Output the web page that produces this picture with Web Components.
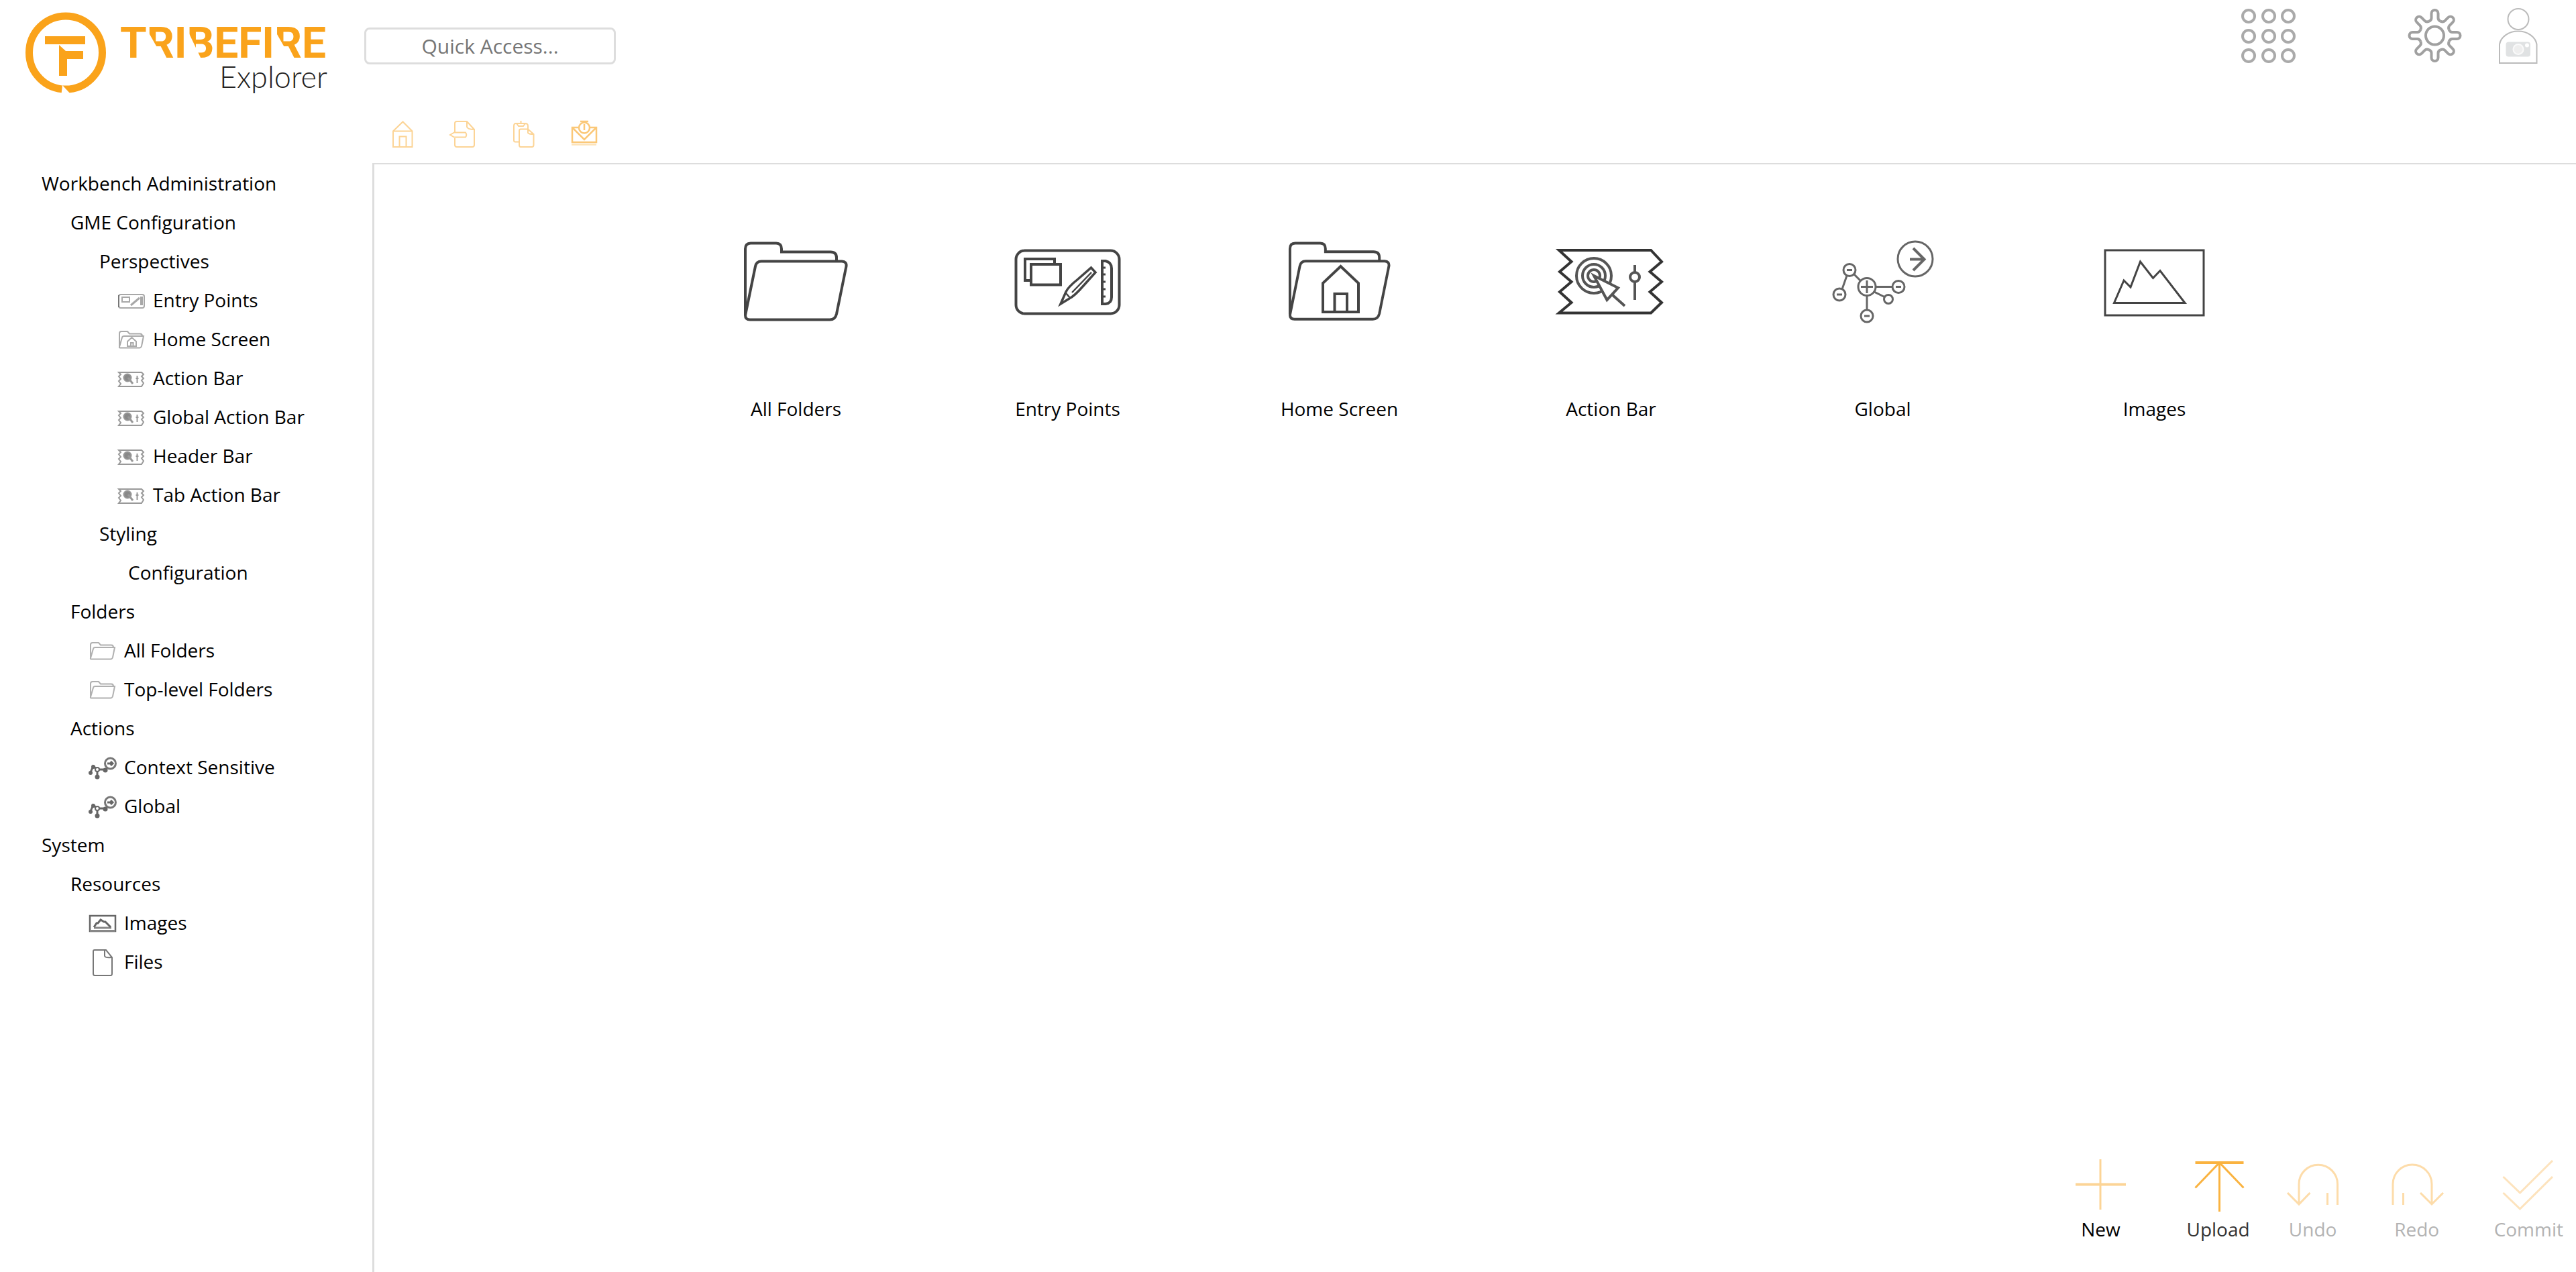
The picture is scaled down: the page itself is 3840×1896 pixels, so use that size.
<!DOCTYPE html>
<html lang="en">
<head>
<meta charset="utf-8">
<title>Tribefire Explorer</title>
<style>
html, body { margin: 0; }
body { font: 28px/38px "Open Sans", "Noto Sans", sans-serif; color: #000; background: #fff; }
</style>
</head>
<body>
<explorer-app></explorer-app>
<script>
const tooth = 'M-8.8 -21.2Q-5 -22.8 -5 -26V-33A5 5 0 0 1 5 -33V-26Q5 -22.8 8.8 -21.2';
const teeth = [0,45,90,135,180,225,270,315].map(a => `<path d="${tooth}" transform="rotate(${a})"/>`).join('');
const dots = [10,40,69].map(y => [10,40,69].map(x => `<circle cx="${x}" cy="${y}" r="9"/>`).join('')).join('');
const folderPaths = `<path d="M4 129V31Q4 22.5 12 22.5H50Q58 22.5 58 31V35.5H131Q140 35.5 140 44V49.5"/><path d="M4 130L19 57Q20.5 49.5 28 49.5H148Q155.500 50 154.500 57L140 128Q138 136.500 130 136.500H11Q4 136.500 4 130Z"/>`;
const miniFolder = '<path d="M2 27V6Q2 3 5 3H14L17 6.500H33Q36 6.500 36 10"/><path d="M2 26L6 12Q6.500 10 9 10H38L35 25Q34 27.500 32 27.500H3Q1.500 27.500 2 26Z"/>';

/* name: [size of the view box, stroke colour, stroke width, shapes] */
const ICONS = {
  'folder': [160, '#444', 4, folderPaths],
  'home-folder': [160, '#444', 4, `<g transform="translate(2 0) scale(.98 .995)">${folderPaths}</g><path d="M55 125V82L81.500 57L108 82V125ZM72.500 125V98H91V125"/>`],
  'entry': [160, '#444', 4, '<rect x="2.500" y="33.500" width="154" height="94" rx="13"/><path d="M25 78H16V46H60V54M25 54H69V84.500H25Z"/><path stroke-width="3.500" d="M114.500 59L121 66L103 86Q90 101 82 105L69 113L77 95Q80 88 95 76Z"/><path stroke-width="2.500" d="M77 97L83 104M115 66L86 96"/><path d="M131 49H136Q145 51 145 60V103Q145 112 136 113H131Z"/><path stroke-width="3" d="M131 59H136M131 69H136M131 80H136M131 91H136M131 102H136"/>'],
  'action': [160, '#333', 4, '<path d="M2 33H139L155 50L137.500 65L155 80L137.500 95L155 111L139 126.500H2L20.500 111L3 95L20.500 80L3 65L20.500 50Z"/><g stroke="#555"><circle cx="54" cy="71" r="26"/><circle cx="54" cy="71" r="17"/><circle cx="54" cy="71" r="9"/><path fill="#fff" d="M54 71L90 89L73.500 107Z"/><path d="M81 99L100 116M115 55V66M115 80V107"/><circle cx="115" cy="73" r="7"/></g>'],
  'global': [160, '#666', 3, '<circle cx="128" cy="46" r="26"/><path stroke-width="4" d="M120 46.500H141M125 30L141.500 46.500L125 63"/><circle cx="30" cy="62.500" r="9"/><circle cx="15" cy="99" r="9"/><circle cx="56" cy="87.500" r="13"/><circle cx="103" cy="87.500" r="9"/><circle cx="88" cy="106" r="6.500"/><circle cx="56" cy="131" r="9"/><path d="M26 71L19 91M37 69L46 78M69 87.500H94M67 95L82 102.500M56 101V122M47 87.500H65M56 78V97M26 62.500H34M11 99H19M99 87.500H107M52 131H60"/>'],
  'image': [160, '#444', 3, '<rect x="6" y="33" width="147" height="97"/><path d="M19.500 111.500L34 78L44 88L58.500 50L77.500 74.500L88 63.500L125 111.500Z"/>'],

  'mini-entry': [40, '#a8a8a8', 2, '<rect x="1" y="10" width="38" height="20" rx="3"/><path d="M1 11V29" stroke="#777"/><path d="M6 14H17V21H6Z"/><path stroke-width="3" d="M19 26L32 15"/><path stroke-width="4" d="M35 13V26"/>'],
  'mini-home-folder': [40, '#aaa', 2, `<g transform="translate(0 4)">${miniFolder}</g><path d="M14 29V22L20.500 16L27 22V29ZM19 29V24H22.500V29"/>`],
  'mini-action': [40, '#999', 2, '<path d="M1 10H35L38 13L35 16L38 19L35 22L38 26L35 31H1L4 27L1 23L4 20L1 16L4 13Z"/><circle cx="14" cy="18" r="5.500" fill="#888"/><path stroke-width="3" d="M15 18L22 27"/><path d="M28.500 15V26M26.500 19H30.500"/>'],
  'mini-folder': [40, '#b0b0b0', 2, `<g transform="translate(0 4)">${miniFolder}</g>`],
  'mini-context': [40, '#666', 2, '<circle cx="31.500" cy="13" r="8" stroke="#777" stroke-width="3"/><path stroke-width="3" d="M27 13H35M32 10L35 13L32 16"/><path stroke-width="3" d="M2 26L6 17L12 22H24M12 22V33"/><g fill="#666" stroke="none"><circle cx="2" cy="27" r="3"/><circle cx="6" cy="18" r="3"/><circle cx="24" cy="23" r="3.500"/><circle cx="12" cy="33" r="3.500"/></g><circle cx="12" cy="22" r="3" fill="#fff"/>'],
  'mini-image': [40, '#666', 2.5, '<rect x="1" y="8" width="38" height="23"/><path stroke="#888" stroke-width="3" d="M1 30.500H39M7 26H33"/><path stroke-width="3" d="M7 25L11 19L13 19L17 14L22 17L24 17L32 25"/>'],
  'mini-file': [40, '#777', 2, '<path d="M8 1H25L34 12V36Q34 39 32 39H8Q6 39 6 36V3Q6 1 8 1Z"/><path d="M23 2V10Q24 13 33 12"/>'],

  'home': [40, '#fcd496', 2, '<path d="M6 39V15.500L20.500 1.500L34.500 15.500V39ZM6 15.500H34.500M15.500 39V23.500H25.500V39"/>'],
  'export': [40, '#fcd496', 2, '<path d="M8 17V4Q8 1 11 1H26L37 13V36Q37 39 34 39H11Q8 39 8 36V26M26 1V9Q27 13 37 13"/><path d="M1 21L7 17.500H24Q26.500 21 24 24.500H7L1 21Z"/>'],
  'paste': [40, '#fcd496', 2, '<path d="M13 31.500H8Q6 31.500 6 29V8Q6 4 9 4H23Q27 4 27 8V12M16.500 0V4M10 4L13 8H20L23 4M14 15Q14 12.500 16 12.500H27L35.500 20V36Q35.500 39 33 39H16Q14 39 14 36ZM27 12.500V18Q28 20 35 20"/>'],
  'mail': [40, '#fbc878', 2.5, '<path d="M13 10H3V32H39V10H29M3 10L21 28L39 10"/><circle cx="21" cy="10.500" r="8" fill="#fff"/><path d="M21 5V14M15 1H27"/><path d="M2 35.500H39" stroke="#fde3b8"/>'],

  'apps': [80, '#aaa', 4, dots],
  'gear': [80, '#a0a0a0', 4, `<g transform="translate(39.500 39)">${teeth}<circle r="13.500"/></g>`],
  'user': [80, '#bbb', 2, '<circle cx="40" cy="14.500" r="15.500"/><path d="M12 80V52A28 22.500 0 0 1 67.500 52V80Z"/><rect x="21.500" y="48.500" width="36.500" height="22" rx="4" fill="#e0e2e3" stroke="none"/><circle cx="40" cy="59.500" r="7.500" fill="#eee" stroke="#fafafa"/><circle cx="53" cy="53.500" r="3" fill="#fff" stroke="none"/>'],

  'new': [80, '#fcd496', 4, '<path d="M40 3V78" stroke-width="3"/><path d="M3 40.500H78"/>'],
  'upload': [80, '#fab340', 4, '<path d="M5.500 8H77.500"/><path stroke-width="3" d="M41.500 8V81M5.500 45.500L41.500 8L77.500 45.500"/>'],
  'undo': [80, '#fddcaa', 3, '<path d="M19 70V40A28.500 28.500 0 0 1 76.500 40V71M2 53L19 70L35.500 53M61.500 53V71"/>'],
  'redo': [80, '#fddcaa', 3, '<path d="M62 70V40A28.500 28.500 0 0 0 4 40V71M79 53L62 70L45 53M19.500 53V71"/>'],
  'commit': [80, '#fde3bd', 3, '<path d="M2.500 29L27.500 53L76 5M2.500 53L27.500 77L76 29"/>']
};

class BaseElement extends HTMLElement {
  connectedCallback() {
    if (!this.shadowRoot) this.attachShadow({ mode: 'open' }).innerHTML = this.render();
  }
}

customElements.define('app-icon', class extends BaseElement {
  render() {
    const [size, color, width, shapes] = ICONS[this.getAttribute('name')];
    return `<style>:host{display:block;flex:none;width:${size}px;height:${size}px}svg{display:block;overflow:visible}</style>
      <svg width="${size}" height="${size}" viewBox="0 0 ${size} ${size}" fill="none" stroke="${color}" stroke-width="${width}" aria-hidden="true">${shapes}</svg>`;
  }
});

customElements.define('app-logo', class extends BaseElement {
  render() {
    return `<style>:host{display:block}svg{display:block}
      .word{font:700 64px Roboto,sans-serif;fill:#faa31b}.sub{font:300 45px Lato,sans-serif;fill:#222}</style>
      <svg width="500" height="160" viewBox="0 0 500 160" role="img" aria-label="Tribefire Explorer">
        <circle cx="98" cy="78.500" r="54.500" fill="none" stroke="#faa31b" stroke-width="11"/>
        <path fill="#fff" d="M91.500 140L93 127L106 141Z"/>
        <path fill="#faa31b" d="M67 54H127V66H67ZM88 67L98 76H124V88H100V113H88Z"/>
        <text class="word" x="179" y="86">TRIBEFIRE</text>
        <!-- slanted cuts through the stems of R, B and R -->
        <path fill="#fff" d="M219 44V88H244ZM279 44V88H300ZM409 44V88H434Z"/>
        <text class="sub" x="488" y="131" text-anchor="end">Explorer</text>
      </svg>`;
  }
});

customElements.define('quick-access', class extends BaseElement {
  render() {
    return `<style>:host{display:block}
      input{box-sizing:border-box;display:block;width:375px;height:55px;border:3px solid #ddd;border-radius:8px;padding:0 12px;background:#fff;font:inherit;font-size:30px;text-align:center;color:#333;outline:0}
      input::placeholder{color:#757575;opacity:1}</style>
      <input type="text" placeholder="Quick Access..." aria-label="Quick Access">`;
  }
});

customElements.define('icon-button', class extends BaseElement {
  render() {
    return `<style>:host{display:block}button{display:block;border:0;padding:0;background:none;cursor:pointer}</style>
      <button type="button" aria-label="${this.getAttribute('label')}"><app-icon name="${this.getAttribute('icon')}"></app-icon></button>`;
  }
});

customElements.define('tree-item', class extends BaseElement {
  render() {
    const icon = this.getAttribute('icon');
    return `<style>:host{display:block}
      a{display:flex;align-items:center;gap:12px;height:58px;color:inherit;text-decoration:none;white-space:nowrap}
      a.leaf{margin-left:-15px}
      span{padding-bottom:5px}
      .children{padding-left:43px}</style>
      <a href="#" class="${icon ? 'leaf' : ''}">${icon ? `<app-icon name="${icon}"></app-icon>` : ''}<span>${this.getAttribute('label')}</span></a>
      <div class="children"><slot></slot></div>`;
  }
});

customElements.define('home-tile', class extends BaseElement {
  render() {
    return `<style>:host{display:block;flex:0 1 405px}
      a{display:flex;flex-direction:column;align-items:center;gap:90px;color:inherit;text-decoration:none;white-space:nowrap}</style>
      <a href="#"><app-icon name="${this.getAttribute('icon')}"></app-icon><span><slot></slot></span></a>`;
  }
});

customElements.define('action-button', class extends BaseElement {
  render() {
    return `<style>:host{display:block;color:#000}
      :host([tone=hover]){color:#333}:host([tone=off]){color:#b3b3b3}
      button{display:flex;flex-direction:column;align-items:center;gap:8px;border:0;padding:0;background:none;font:inherit;color:inherit;white-space:nowrap}</style>
      <button type="button"><app-icon name="${this.getAttribute('icon')}"></app-icon><span><slot></slot></span></button>`;
  }
});

customElements.define('explorer-header', class extends BaseElement {
  render() {
    return `<style>:host{display:flex;align-items:flex-start;height:180px}
      app-logo{flex:0 0 543px}
      quick-access{margin-top:41px}
      nav{display:flex;gap:44px;margin-left:auto;padding:14px 46px 0 0}
      .apps{margin-right:124px}</style>
      <app-logo></app-logo>
      <quick-access></quick-access>
      <nav>
        <icon-button class="apps" icon="apps" label="Applications"></icon-button>
        <icon-button icon="gear" label="Settings"></icon-button>
        <icon-button icon="user" label="User"></icon-button>
      </nav>`;
  }
});

customElements.define('workbench-tree', class extends BaseElement {
  render() {
    return `<style>:host{display:block;box-sizing:border-box;flex:0 0 555px;padding:66px 0 0 62px}</style>
      <nav>
        <tree-item label="Workbench Administration">
          <tree-item label="GME Configuration">
            <tree-item label="Perspectives">
              <tree-item icon="mini-entry" label="Entry Points"></tree-item>
              <tree-item icon="mini-home-folder" label="Home Screen"></tree-item>
              <tree-item icon="mini-action" label="Action Bar"></tree-item>
              <tree-item icon="mini-action" label="Global Action Bar"></tree-item>
              <tree-item icon="mini-action" label="Header Bar"></tree-item>
              <tree-item icon="mini-action" label="Tab Action Bar"></tree-item>
            </tree-item>
            <tree-item label="Styling">
              <tree-item label="Configuration"></tree-item>
            </tree-item>
          </tree-item>
          <tree-item label="Folders">
            <tree-item icon="mini-folder" label="All Folders"></tree-item>
            <tree-item icon="mini-folder" label="Top-level Folders"></tree-item>
          </tree-item>
          <tree-item label="Actions">
            <tree-item icon="mini-context" label="Context Sensitive"></tree-item>
            <tree-item icon="mini-context" label="Global"></tree-item>
          </tree-item>
        </tree-item>
        <tree-item label="System">
          <tree-item label="Resources">
            <tree-item icon="mini-image" label="Images"></tree-item>
            <tree-item icon="mini-file" label="Files"></tree-item>
          </tree-item>
        </tree-item>
      </nav>`;
  }
});

customElements.define('tab-toolbar', class extends BaseElement {
  render() {
    return `<style>:host{display:flex;gap:50px;padding:0 25px 23px}</style>
      <icon-button icon="home" label="Home"></icon-button>
      <icon-button icon="export" label="Changes"></icon-button>
      <icon-button icon="paste" label="Clipboard"></icon-button>
      <icon-button icon="mail" label="Notifications"></icon-button>`;
  }
});

customElements.define('home-screen', class extends BaseElement {
  render() {
    return `<style>:host{display:flex;flex-direction:column;flex:1;border:solid #ddd;border-width:2px 0 0 3px}
      main{display:flex;justify-content:center;flex:1;padding-top:95px}
      footer,.group{display:flex;align-items:flex-end}
      footer{justify-content:flex-end;gap:54px;padding:0 19px 45px}
      .group{gap:75px}.group.primary{gap:88px}</style>
      <main>
        <home-tile icon="folder">All Folders</home-tile>
        <home-tile icon="entry">Entry Points</home-tile>
        <home-tile icon="home-folder">Home Screen</home-tile>
        <home-tile icon="action">Action Bar</home-tile>
        <home-tile icon="global">Global</home-tile>
        <home-tile icon="image">Images</home-tile>
      </main>
      <footer>
        <div class="group primary">
          <action-button icon="new">New</action-button>
          <action-button icon="upload" tone="hover">Upload</action-button>
        </div>
        <div class="group">
          <action-button icon="undo" tone="off">Undo</action-button>
          <action-button icon="redo" tone="off">Redo</action-button>
          <action-button icon="commit" tone="off">Commit</action-button>
        </div>
      </footer>`;
  }
});

customElements.define('explorer-app', class extends BaseElement {
  render() {
    return `<style>:host{display:flex;flex-direction:column;min-height:100vh}
      .body{display:flex;flex:1}
      .content{display:flex;flex-direction:column;flex:1;min-width:0}</style>
      <explorer-header></explorer-header>
      <div class="body">
        <workbench-tree></workbench-tree>
        <div class="content">
          <tab-toolbar></tab-toolbar>
          <home-screen></home-screen>
        </div>
      </div>`;
  }
});
</script>
</body>
</html>
